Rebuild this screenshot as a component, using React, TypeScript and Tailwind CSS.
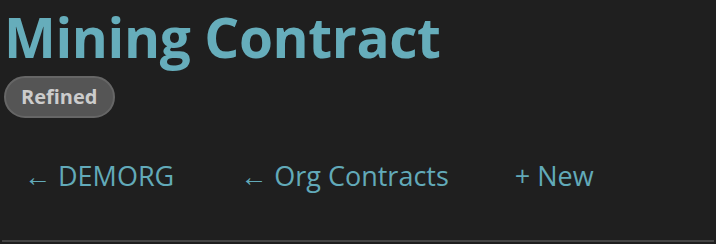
export default function App() {
  return (
    <div className="w-[716px] h-[244px] bg-[#1f1f1f] overflow-hidden" style={{ fontFamily: '"Open Sans", "Noto Sans", sans-serif' }}>
      <div className="px-[4px]">
        <h1 className="text-[55px] leading-[74px] font-bold text-[#66adbb] tracking-[-0.4px]">Mining Contract</h1>
        <div className="flex mt-[2px]">
          <span className="inline-flex items-center h-[42px] pl-[15px] pr-[16px] rounded-full bg-[#555555] border-2 border-[#666666] text-[#cccccc] font-bold text-[20px]">Refined</span>
        </div>
        <div className="flex items-center gap-[66px] pl-[20px] mt-[38px] text-[27px] font-medium text-[#62aab9]">
          <a>← DEMORG</a>
          <a>← Org Contracts</a>
          <a>+ New</a>
        </div>
      </div>
      <div className="mx-[2px] mt-[43px] h-[2px] bg-[#444444]" />
    </div>
  );
}
